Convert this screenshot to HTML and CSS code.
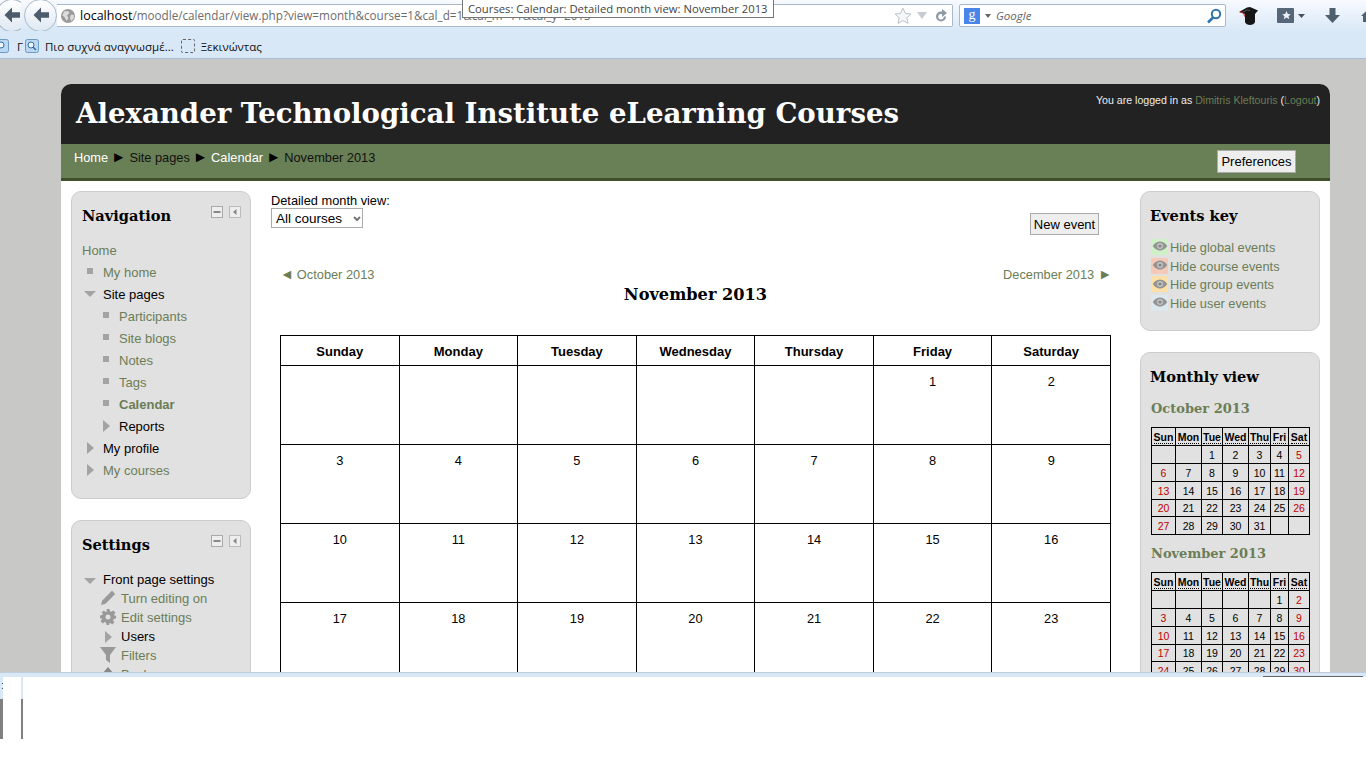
FILE: index.html
```html
<!DOCTYPE html>
<html lang="en">
<head>
<meta charset="utf-8">
<title>Courses: Calendar: Detailed month view: November 2013</title>
<link rel="stylesheet" href="styles.css">
</head>
<body>
<svg class="sprite" aria-hidden="true">
  <symbol id="back" viewBox="0 0 20 20"><path d="M10 2.500 2.500 10 10 17.500V12.800h8V7.200h-8z"/></symbol>
  <symbol id="minus" viewBox="0 0 12 12"><rect x=".5" y=".5" width="11" height="11" fill="#eee" stroke="#aaa"/><rect x="2.500" y="5" width="7" height="2" fill="#888"/></symbol>
  <symbol id="dock" viewBox="0 0 12 12"><rect x=".5" y=".5" width="11" height="11" fill="#eee" stroke="#bbb"/><path d="M7.500 3v6L4 6z" fill="#888"/></symbol>
  <symbol id="eye" viewBox="0 0 16 12"><path d="M8 1.500C4.500 1.500 2 4 .8 6 2 8 4.500 10.500 8 10.500S14 8 15.200 6C14 4 11.500 1.500 8 1.500z" fill="#939393"/><circle cx="8" cy="6" r="3" fill="#c4c4c4"/><circle cx="8" cy="6" r="1.600" fill="#858585"/></symbol>
  <symbol id="pencil" viewBox="0 0 16 16"><path d="M12 .8 15.200 4 5.500 13.700 1 15l1.300-4.500z" fill="#999"/></symbol>
  <symbol id="gear" viewBox="0 0 16 16"><path fill="#999" fill-rule="evenodd" d="M6.500 0h3l.4 2.200 1.500.6L13.300 1.500l2.100 2.100-1.300 1.900.6 1.500L16 6.500v3l-2.300.4-.6 1.500 1.300 1.900-2.100 2.100-1.900-1.300-1.500.6L9.500 16h-3l-.4-2.300-1.500-.6-1.900 1.300L.6 12.300l1.300-1.900-.6-1.500L0 9.500v-3l2.300-.4.600-1.500L1.600 3.700 3.700 1.600l1.900 1.300 1.500-.6zM8 5.500a2.500 2.500 0 1 0 0 5 2.500 2.500 0 0 0 0-5z"/></symbol>
  <symbol id="filter" viewBox="0 0 16 16"><path d="M0 0h16L10 8v8L6 13V8z" fill="#999"/></symbol>
  <symbol id="backup" viewBox="0 0 16 16"><path d="M8 1 14 8h-3v4H5V8H2z" fill="#888"/></symbol>
</svg>

<header class="chrome">
  <div class="toolbar">
    <span class="nav-btn nav-btn-cut"><svg class="back-arrow"><use href="#back"/></svg></span>
    <span class="nav-btn"><svg class="back-arrow"><use href="#back"/></svg></span>
    <div class="urlbar">
      <svg class="globe" viewBox="0 0 14 14"><circle cx="7" cy="7" r="7" fill="#9a9a9a"/><path d="M3 2.500 7 2l1.500 2L6 6.500 7.500 9 5.500 12 3.500 8 1.500 6.500zM10 5.500l3 .5-.5 4-2.500 2-1-3z" fill="#dcdcdc"/></svg>
      <span class="url"><span class="url-host">localhost</span>/moodle/calendar/view.php?view=month&amp;course=1&amp;cal_d=1&amp;cal_m=11&amp;cal_y=2013</span>
      <svg class="star" viewBox="0 0 18 18"><path d="M9 1.200l2.400 5.200 5.600.6-4.200 3.800 1.200 5.600L9 13.600l-5 2.800 1.200-5.600L1 7l5.600-.6z" fill="#f4f7fa" stroke="#bcc3ca"/></svg>
      <svg class="drop" viewBox="0 0 10 7"><path d="M0 0h10L5 7z" fill="#c5ccd3"/></svg>
      <svg class="reload" viewBox="0 0 16 16"><path d="M13 8.500A5 5 0 1 1 8 3.500h1V1l5 4-5 4V6H8a2.700 2.700 0 1 0 2.700 2.500z" fill="#8d99a5"/></svg>
    </div>
    <div class="searchbar">
      <span class="g-box">g</span>
      <svg class="drop-small" viewBox="0 0 6 4"><path d="M0 0h6L3 4z" fill="#666"/></svg>
      <span class="search-text">Google</span>
      <svg class="magnifier" viewBox="0 0 16 16"><circle cx="10" cy="6" r="4.200" fill="none" stroke="#3273ad" stroke-width="2"/><path d="M7 9.500 2 14.500" stroke="#3273ad" stroke-width="2.600"/></svg>
    </div>
    <svg class="hat" viewBox="0 0 20 20"><path d="M0 6 8 1.500 11 1l8 3.500-3 3.500v8c-1 4-9 4-10 0V8z" fill="#161616"/><path d="M3 6.500 8 4l3 .5" stroke="#555" fill="none"/><path d="M1 5.500l4 2 .5 3" stroke="#c02020" fill="none"/></svg>
    <svg class="starbox" viewBox="0 0 17 15"><rect width="17" height="15" rx="1" fill="#56677a"/><path d="M9.500 3l1.300 3 3 .2-2.300 2 .8 3-2.800-1.600L6.700 11.200l.8-3-2.300-2 3-.2z" fill="#eef2f6"/></svg>
    <svg class="drop-tool" viewBox="0 0 7 4"><path d="M0 0h7L3.500 4z" fill="#46535f"/></svg>
    <svg class="download" viewBox="0 0 15 15"><path d="M4.500 0h6v7H15L7.500 15 0 7h4.500z" fill="#4f5f6e"/></svg>
    <svg class="home" viewBox="0 0 15 15"><path d="M7.500 1 15 8h-2v6H2V8H0z" fill="#4f5f6e"/></svg>
  </div>
  <div class="bookmarks">
    <svg class="bm-icon bm-icon-cut" viewBox="0 0 14 14"><rect x=".5" y=".5" width="13" height="13" rx="2" fill="#bcd7f0" stroke="#6d9ac4"/><circle cx="6" cy="6" r="3" fill="#eef5fc" stroke="#2d6ea8"/></svg>
    <span class="bm-cut">Γ</span>
    <svg class="bm-icon" viewBox="0 0 14 14"><rect x=".5" y=".5" width="13" height="13" rx="2" fill="#bcd7f0" stroke="#6d9ac4"/><circle cx="6" cy="6" r="3" fill="#eef5fc" stroke="#2d6ea8"/><path d="M8 8l3 3" stroke="#2d6ea8" stroke-width="1.500"/></svg>
    <span class="bm-label">Πιο συχνά αναγνωσμέ...</span>
    <span class="bm-dashed"></span>
    <span class="bm-label">Ξεκινώντας</span>
  </div>
</header>
<div class="tooltip">Courses: Calendar: Detailed month view: November 2013</div>

<div class="viewport">
  <div class="page">
    <div class="site-head">
      <h1 class="site-title">Alexander Technological Institute eLearning Courses</h1>
      <div class="login">You are logged in as <a href="#">Dimitris Kleftouris</a> (<a href="#">Logout</a>)</div>
    </div>
    <div class="crumbbar">
      <div class="crumbs"><a href="#">Home</a><i>►</i><span>Site pages</span><i>►</i><a href="#">Calendar</a><i>►</i><span>November 2013</span></div>
      <button class="btn btn-pref" type="button">Preferences</button>
    </div>
    <div class="columns">
      <aside class="side side-left">
        <section class="block block-nav">
          <div class="block-head"><h2>Navigation</h2><span class="block-ctl"><svg><use href="#minus"/></svg><svg><use href="#dock"/></svg></span></div>
          <ul class="tree">
            <li class="lv0"><a href="#">Home</a></li>
            <li class="lv1"><b class="sq"></b><a href="#">My home</a></li>
            <li class="lv1"><b class="tri-d"></b><span>Site pages</span></li>
            <li class="lv2"><b class="sq"></b><a href="#">Participants</a></li>
            <li class="lv2"><b class="sq"></b><a href="#">Site blogs</a></li>
            <li class="lv2"><b class="sq"></b><a href="#">Notes</a></li>
            <li class="lv2"><b class="sq"></b><a href="#">Tags</a></li>
            <li class="lv2"><b class="sq"></b><a href="#" class="active">Calendar</a></li>
            <li class="lv2"><b class="tri-r"></b><span>Reports</span></li>
            <li class="lv1"><b class="tri-r"></b><span>My profile</span></li>
            <li class="lv1"><b class="tri-r"></b><a href="#">My courses</a></li>
          </ul>
        </section>
        <section class="block block-settings">
          <div class="block-head"><h2>Settings</h2><span class="block-ctl"><svg><use href="#minus"/></svg><svg><use href="#dock"/></svg></span></div>
          <ul class="tree tree-tight">
            <li class="lv1"><b class="tri-d"></b><span>Front page settings</span></li>
            <li class="st"><svg><use href="#pencil"/></svg><a href="#">Turn editing on</a></li>
            <li class="st"><svg><use href="#gear"/></svg><a href="#">Edit settings</a></li>
            <li class="st"><b class="tri-r"></b><span>Users</span></li>
            <li class="st"><svg><use href="#filter"/></svg><a href="#">Filters</a></li>
            <li class="st"><svg><use href="#backup"/></svg><a href="#">Backup</a></li>
          </ul>
        </section>
      </aside>

      <main class="main">
        <div class="filter-row">
          <div class="filter">
            <label for="course-filter">Detailed month view:</label>
            <select id="course-filter" class="select"><option>All courses</option></select>
          </div>
          <button class="btn btn-new" type="button">New event</button>
        </div>
        <div class="month-nav">
          <a href="#"><i>◄</i>October 2013</a>
          <a href="#">December 2013<i class="after">►</i></a>
        </div>
        <h2 class="month-title">November 2013</h2>
        <table class="cal">
          <thead><tr><th>Sunday</th><th>Monday</th><th>Tuesday</th><th>Wednesday</th><th>Thursday</th><th>Friday</th><th>Saturday</th></tr></thead>
          <tbody>
            <tr><td></td><td></td><td></td><td></td><td></td><td>1</td><td>2</td></tr>
            <tr><td>3</td><td>4</td><td>5</td><td>6</td><td>7</td><td>8</td><td>9</td></tr>
            <tr><td>10</td><td>11</td><td>12</td><td>13</td><td>14</td><td>15</td><td>16</td></tr>
            <tr><td>17</td><td>18</td><td>19</td><td>20</td><td>21</td><td>22</td><td>23</td></tr>
            <tr><td>24</td><td>25</td><td>26</td><td>27</td><td>28</td><td>29</td><td>30</td></tr>
          </tbody>
        </table>
      </main>

      <aside class="side side-right">
        <section class="block block-key">
          <div class="block-head"><h2>Events key</h2></div>
          <ul class="key">
            <li><span class="swatch sw-global"><svg><use href="#eye"/></svg></span><a href="#">Hide global events</a></li>
            <li><span class="swatch sw-course"><svg><use href="#eye"/></svg></span><a href="#">Hide course events</a></li>
            <li><span class="swatch sw-group"><svg><use href="#eye"/></svg></span><a href="#">Hide group events</a></li>
            <li><span class="swatch sw-user"><svg><use href="#eye"/></svg></span><a href="#">Hide user events</a></li>
          </ul>
        </section>
        <section class="block block-month">
          <div class="block-head"><h2>Monthly view</h2></div>
          <h3 class="mini-title">October 2013</h3>
          <table class="mini">
            <colgroup><col><col><col><col><col><col><col></colgroup>
            <thead><tr><th><abbr>Sun</abbr></th><th><abbr>Mon</abbr></th><th><abbr>Tue</abbr></th><th><abbr>Wed</abbr></th><th><abbr>Thu</abbr></th><th><abbr>Fri</abbr></th><th><abbr>Sat</abbr></th></tr></thead>
            <tbody>
              <tr><td></td><td></td><td>1</td><td>2</td><td>3</td><td>4</td><td class="we">5</td></tr>
              <tr><td class="we">6</td><td>7</td><td>8</td><td>9</td><td>10</td><td>11</td><td class="we">12</td></tr>
              <tr><td class="we">13</td><td>14</td><td>15</td><td>16</td><td>17</td><td>18</td><td class="we">19</td></tr>
              <tr><td class="we">20</td><td>21</td><td>22</td><td>23</td><td>24</td><td>25</td><td class="we">26</td></tr>
              <tr><td class="we">27</td><td>28</td><td>29</td><td>30</td><td>31</td><td></td><td></td></tr>
            </tbody>
          </table>
          <h3 class="mini-title">November 2013</h3>
          <table class="mini">
            <colgroup><col><col><col><col><col><col><col></colgroup>
            <thead><tr><th><abbr>Sun</abbr></th><th><abbr>Mon</abbr></th><th><abbr>Tue</abbr></th><th><abbr>Wed</abbr></th><th><abbr>Thu</abbr></th><th><abbr>Fri</abbr></th><th><abbr>Sat</abbr></th></tr></thead>
            <tbody>
              <tr><td></td><td></td><td></td><td></td><td></td><td>1</td><td class="we">2</td></tr>
              <tr><td class="we">3</td><td>4</td><td>5</td><td>6</td><td>7</td><td>8</td><td class="we">9</td></tr>
              <tr><td class="we">10</td><td>11</td><td>12</td><td>13</td><td>14</td><td>15</td><td class="we">16</td></tr>
              <tr><td class="we">17</td><td>18</td><td>19</td><td>20</td><td>21</td><td>22</td><td class="we">23</td></tr>
              <tr><td class="we">24</td><td>25</td><td>26</td><td>27</td><td>28</td><td>29</td><td class="we">30</td></tr>
            </tbody>
          </table>
        </section>
      </aside>
    </div>
  </div>
</div>

<footer class="lower">
  <div class="lower-band"><span class="lower-line"></span></div>
  <div class="stub">
    <span class="stub-edge"></span>
    <span class="stub-body"></span>
    <span class="stub-side"></span>
  </div>
</footer>
</body>
</html>
```
FILE: styles.css
```css
* { box-sizing: border-box; }
html, body { margin: 0; padding: 0; height: 768px; overflow: hidden; }
body { font-family: "Liberation Sans", Arial, sans-serif; font-size: 12.8px; color: #000; background: #fff; position: relative; }
ul { list-style: none; margin: 0; padding: 0; }
a { color: #6b7d56; text-decoration: none; }
.sprite { display: none; }

/* Browser chrome */
.chrome { height: 59px; background: #d9e8f7; border-bottom: 1px solid #a9bdd3; font-family: "Open Sans", "Noto Sans", sans-serif; }
.toolbar { height: 31px; display: flex; align-items: center; background: linear-gradient(#f7fafe, #d9e8f7); overflow: hidden; }
.nav-btn { flex: none; width: 33px; height: 33px; margin-top: -1px; margin-left: 3px; border-radius: 50%; border: 1px solid #a9b9c9; background: linear-gradient(#fff, #dfe8f2); display: flex; align-items: center; justify-content: center; }
.nav-btn-cut { margin-left: -4px; width: 32px; clip-path: inset(0 7px 0 0); margin-right: -7px; }
.back-arrow { width: 20px; height: 20px; fill: #4c5c6c; }
.urlbar { width: 896px; height: 23px; margin-left: 0; background: #fff; border: 1px solid #a9b9ca; border-left: 0; border-radius: 0 2px 2px 0; display: flex; align-items: center; flex: none; }
.globe { width: 14px; height: 14px; margin-left: 4px; flex: none; }
.url { flex: 1; min-width: 0; margin-left: 5px; font-size: 11.7px; color: #6c6c6c; white-space: nowrap; overflow: hidden; }
.url-host { color: #000; font-size: 12.5px; }
.star { width: 18px; height: 18px; flex: none; }
.drop { width: 10px; height: 7px; margin-left: 5px; flex: none; }
.reload { width: 16px; height: 16px; margin: 0 3px 0 6px; flex: none; }
.searchbar { width: 267px; height: 23px; margin-left: 6px; flex: none; background: #fff; border: 1px solid #a9b9ca; border-radius: 2px; display: flex; align-items: center; }
.g-box { width: 16px; height: 16px; margin-left: 4px; background: #4a86e8; color: #fff; font: 14px/13px "Liberation Serif", serif; text-align: center; flex: none; }
.drop-small { width: 6px; height: 4px; margin-left: 5px; flex: none; }
.search-text { flex: 1; margin-left: 5px; font-size: 11.5px; font-style: italic; color: #666; }
.magnifier { width: 16px; height: 16px; margin-right: 3px; flex: none; }
.hat { width: 20px; height: 20px; margin-left: 13px; flex: none; }
.starbox { width: 17px; height: 15px; margin-left: 18px; flex: none; }
.drop-tool { width: 7px; height: 4px; margin-left: 4px; flex: none; }
.download { width: 15px; height: 15px; margin-left: 20px; flex: none; }
.home { width: 15px; height: 15px; margin-left: 21px; flex: none; }
.bookmarks { height: 27px; padding-top: 3px; display: flex; align-items: center; font-size: 11.5px; color: #111; }
.bm-icon { width: 14px; height: 14px; flex: none; }
.bm-icon-cut { margin-left: -5px; }
.bm-cut { width: 16px; padding-left: 8px; overflow: hidden; flex: none; }
.bm-label { margin-left: 6px; white-space: nowrap; }
.bm-dashed { width: 14px; height: 14px; margin-left: 7px; border: 1px dashed #666; border-radius: 2px; flex: none; }
.tooltip { position: absolute; left: 462px; top: -1px; height: 19px; padding: 0 5px; background: #fff; border: 1px solid #767676; font: 11.27px/17px "Open Sans", "Noto Sans", sans-serif; color: #444; white-space: nowrap; }

/* Page */
.viewport { height: 613px; background: #c8c8c6; padding: 25px 36px 0 61px; overflow: hidden; }
.page { background: #fff; border-radius: 10px 10px 0 0; }
.site-head { height: 60px; background: #222; border-radius: 10px 10px 0 0; display: flex; justify-content: space-between; padding: 0 10px 0 15px; }
.site-title { margin: 12px 0 0; font: bold 27.6px/36px "DejaVu Serif", serif; color: #fff; white-space: nowrap; }
.login { margin-top: 10px; font-size: 10.6px; line-height: 13px; color: #eee; white-space: nowrap; }
.crumbbar { height: 37px; background: #697f55; border-bottom: 3px solid #3f5028; display: flex; justify-content: space-between; padding: 6px 34px 0 13px; }
.crumbs { line-height: 15px; margin-top: 0; color: #111; }
.crumbs a { color: #fff; }
.crumbs i { font-style: normal; font-size: 15px; line-height: 12px; margin: 0 3.2px; color: #000; }
.btn { font: 13px "Liberation Sans", sans-serif; background: #eee; border: 1px solid #aaa; border-radius: 0; padding: 0; color: #000; }
.btn-pref { width: 79px; height: 23px; }

.columns { display: flex; padding: 10px 10px 0; align-items: flex-start; }
.side { width: 180px; flex: none; }
.block { background: #e1e1e1; border: 1px solid #ccc; border-radius: 10px; padding: 0 10px; }
.block-head { display: flex; justify-content: space-between; align-items: flex-start; height: 47px; padding-top: 14px; }
.block-head h2 { margin: 0; font: bold 14.6px/20px "DejaVu Serif", serif; }
.block-ctl { display: flex; gap: 6px; margin-right: -1px; }
.block-ctl svg { width: 12px; height: 12px; }
.block-nav { height: 308px; }
.block-settings { margin-top: 21px; height: 200px; }
.block-settings .block-head { height: 49px; }

.tree { font-size: 13px; }
.tree li { height: 22px; display: flex; align-items: center; position: relative; }
.tree-tight li { height: 19px; }
.tree li span { color: #000; }
.active { font-weight: bold; }
.lv0 { padding-left: 0; }
.lv1 { padding-left: 21px; }
.lv2 { padding-left: 37px; }
.st { padding-left: 39px; }
.sq, .tri-d, .tri-r { position: absolute; }
.sq { width: 6px; height: 6px; background: #a3a3a3; top: 7px; }
.lv1 .sq { left: 5px; }
.lv2 .sq { left: 21px; }
.tri-d { left: 2px; top: 8px; border: 6px solid transparent; border-top: 6px solid #a3a3a3; border-bottom: 0; }
.tri-r { top: 5px; border: 6px solid transparent; border-left: 7px solid #a3a3a3; border-right: 0; }
.lv1 .tri-r { left: 5px; }
.lv2 .tri-r { left: 21px; }
.st .tri-r { left: 23px; top: 4px; }
.st svg { position: absolute; left: 18px; top: 1px; width: 16px; height: 16px; }

/* Main */
.main { flex: 1; min-width: 0; padding: 3px 20px 0; }
.filter-row { display: flex; justify-content: space-between; align-items: flex-start; padding-right: 21px; }
.filter { display: flex; flex-direction: column; align-items: flex-start; line-height: 14px; }
.select { width: 92px; height: 20px; font: 13.5px "Liberation Sans", sans-serif; appearance: none; background: #fff url("data:image/svg+xml,%3Csvg xmlns='http://www.w3.org/2000/svg' width='8' height='6'%3E%3Cpath d='M1 1l3 3 3-3' fill='none' stroke='%23777' stroke-width='2'/%3E%3C/svg%3E") no-repeat 81px 7px; border: 1px solid #aaa; border-radius: 0; padding: 0 0 0 4px; }
.btn-new { width: 69px; height: 22px; margin-top: 19px; }
.month-nav { display: flex; justify-content: space-between; margin-top: 32px; padding: 0 8px 0 9px; line-height: 15px; }
.month-nav i { font-style: normal; font-size: 14px; line-height: 12px; margin-right: 3px; }
.month-nav i.after { margin: 0 0 0 4px; }
.month-title { margin: 1px 0 0; text-align: center; font: bold 16.2px/24px "DejaVu Serif", serif; }
.cal { width: 831px; margin: 28px auto 0; border-collapse: collapse; table-layout: fixed; }
.cal th, .cal td { border: 1px solid #000; text-align: center; padding: 0; }
.cal th { height: 30px; padding-top: 1px; font-size: 13px; }
.cal td { height: 79px; vertical-align: top; padding-top: 8px; line-height: 15px; }

/* Right */
.block-key .block-head h2 { margin-left: -1px; }
.block-month .block-head h2 { margin-left: -1px; }
.block-key .block-head { height: 46px; }
.key li { height: 18.7px; display: flex; align-items: center; gap: 2px; }
.swatch { width: 17px; height: 16px; display: flex; align-items: center; justify-content: center; flex: none; margin-top: -1px; }
.swatch svg { width: 16px; height: 12px; margin-top: -1px; }
.sw-global { background: #d0f0c8; }
.sw-course { background: #f5c9b8; }
.sw-group { background: #fde0a8; }
.sw-user { background: #dce7ee; }
.block-key { height: 140px; }
.block-month { margin-top: 21px; height: 400px; }
.block-month .block-head { height: 47px; }
.mini-title { margin: 0; font: bold 13px/17px "DejaVu Serif", serif; color: #6b7d56; }
.mini { width: 158px; margin: 10px 0; border-collapse: collapse; table-layout: fixed; font-size: 10.5px; }
.mini th, .mini td { border: 1px solid #000; padding: 0; text-align: center; height: 18px; line-height: 12px; }
.mini tbody tr:nth-child(4) td { height: 17px; }
.mini abbr { border-bottom: 1px dotted #000; }
.mini .we { color: #c00000; }
.mini col:nth-child(1) { width: 24px; }
.mini col:nth-child(2) { width: 26px; }
.mini col:nth-child(3) { width: 21px; }
.mini col:nth-child(4) { width: 26px; }
.mini col:nth-child(5) { width: 22px; }
.mini col:nth-child(6) { width: 18px; }
.mini col:nth-child(7) { width: 21px; }

/* Lower pane */
.lower { height: 96px; background: #fff; }
.lower-band { height: 5px; background: #d9e8f7; border-top: 1px solid #c0cedc; position: relative; }
.lower-line { position: absolute; right: 3px; top: 3px; width: 100px; height: 1px; background: #666; }
.stub { width: 23px; height: 62px; display: flex; }
.stub-edge { width: 3px; background: linear-gradient(#555, #555) 2px 6px / 1px 1px no-repeat, linear-gradient(#555, #555) 2px 11px / 1px 1px no-repeat, linear-gradient(#d9e8f7 22px, #808080 22px); }
.stub-body { width: 18px; margin-top: 2px; background: #fff; }
.stub-side { width: 2px; background: linear-gradient(#d9e8f7 22px, #808080 22px); }
```
